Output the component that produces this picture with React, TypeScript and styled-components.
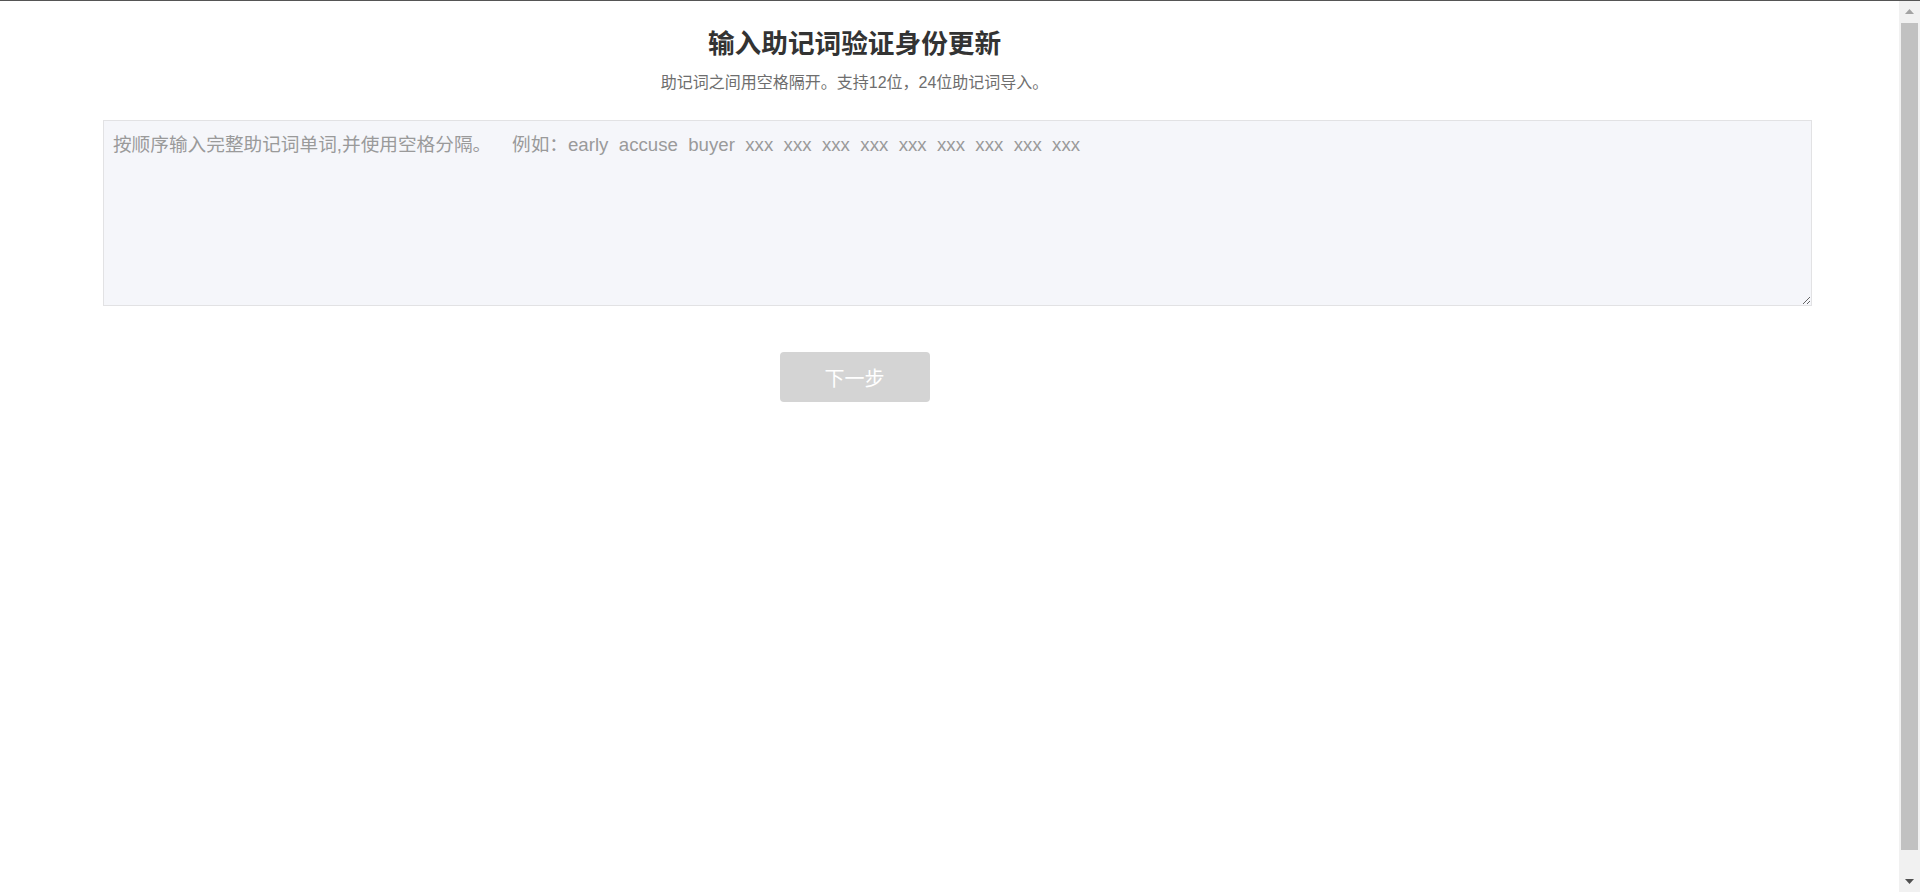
import React from "react";
import styled, { createGlobalStyle } from "styled-components";

const GlobalStyle = createGlobalStyle`
  html, body {
    margin: 0;
    padding: 0;
    background: #ffffff;
    font-family: "Liberation Sans", "Noto Sans CJK SC", sans-serif;
    overflow: hidden;
  }
  * { box-sizing: border-box; }
`;

const Shell = styled.div`
  display: flex;
  height: 100vh;
  border-top: 1px solid #555555;
  overflow: hidden;
`;

const Page = styled.main`
  flex: 1;
  min-width: 0;
  display: flex;
  flex-direction: column;
`;

const Header = styled.header`
  width: 90%;
  padding-top: 22.5px;
  text-align: center;
`;

const Title = styled.h1`
  margin: 0;
  font-size: 26.67px;
  line-height: 40px;
  font-weight: 700;
  color: #333333;
`;

const Subtitle = styled.p`
  margin: 7.5px 0 0;
  font-size: 16px;
  line-height: 24px;
  color: #6e6e6e;
`;

const MnemonicInput = styled.textarea`
  display: block;
  margin: 25px 0 0 calc(5% + 8px);
  width: 90%;
  height: 186px;
  padding: 10px 9px 9px;
  border: 1px solid #e2e2e4;
  background: #f5f6fa;
  font-family: "Liberation Sans", "Noto Sans CJK SC", sans-serif;
  font-size: 18.67px;
  line-height: 28px;
  color: #333333;
  outline: none;
  resize: both;

  &::placeholder {
    color: #9a9a9a;
  }
`;

const ButtonRow = styled.div`
  width: 90%;
  margin-top: 46px;
  display: flex;
  justify-content: center;
`;

const NextButton = styled.button`
  width: 150px;
  height: 50px;
  border: none;
  border-radius: 4px;
  background: #d4d4d4;
  color: #ffffff;
  font-family: "Liberation Sans", "Noto Sans CJK SC", sans-serif;
  font-size: 20px;
  cursor: not-allowed;
`;

const ScrollRail = styled.div`
  width: 21px;
  flex: none;
  display: flex;
  flex-direction: column;
  background: #f1f1f1;
`;

const ScrollArrow = styled.div<{ $dark?: boolean }>`
  height: 21px;
  flex: none;
  display: flex;
  align-items: center;
  justify-content: center;
  color: ${(p) => (p.$dark ? "#505050" : "#a3a3a3")};
`;

const ScrollTrack = styled.div`
  flex: 1;
  padding: 1px 2px 21px;
  display: flex;
  flex-direction: column;
`;

const ScrollThumb = styled.div`
  height: 827px;
  background: #c1c1c1;
`;

const Triangle = ({ down }: { down?: boolean }) => (
  <svg width="9" height="5" viewBox="0 0 9 5" aria-hidden="true">
    <path d={down ? "M0 0 H9 L4.5 5 Z" : "M0 5 H9 L4.5 0 Z"} fill="currentColor" />
  </svg>
);

export default function App() {
  return (
    <>
      <GlobalStyle />
      <Shell>
        <Page>
          <Header>
            <Title>输入助记词验证身份更新</Title>
            <Subtitle>助记词之间用空格隔开。支持12位，24位助记词导入。</Subtitle>
          </Header>
          <MnemonicInput placeholder="按顺序输入完整助记词单词,并使用空格分隔。    例如：early  accuse  buyer  xxx  xxx  xxx  xxx  xxx  xxx  xxx  xxx  xxx" />
          <ButtonRow>
            <NextButton disabled>下一步</NextButton>
          </ButtonRow>
        </Page>
        <ScrollRail>
          <ScrollArrow>
            <Triangle />
          </ScrollArrow>
          <ScrollTrack>
            <ScrollThumb />
          </ScrollTrack>
          <ScrollArrow $dark>
            <Triangle down />
          </ScrollArrow>
        </ScrollRail>
      </Shell>
    </>
  );
}
